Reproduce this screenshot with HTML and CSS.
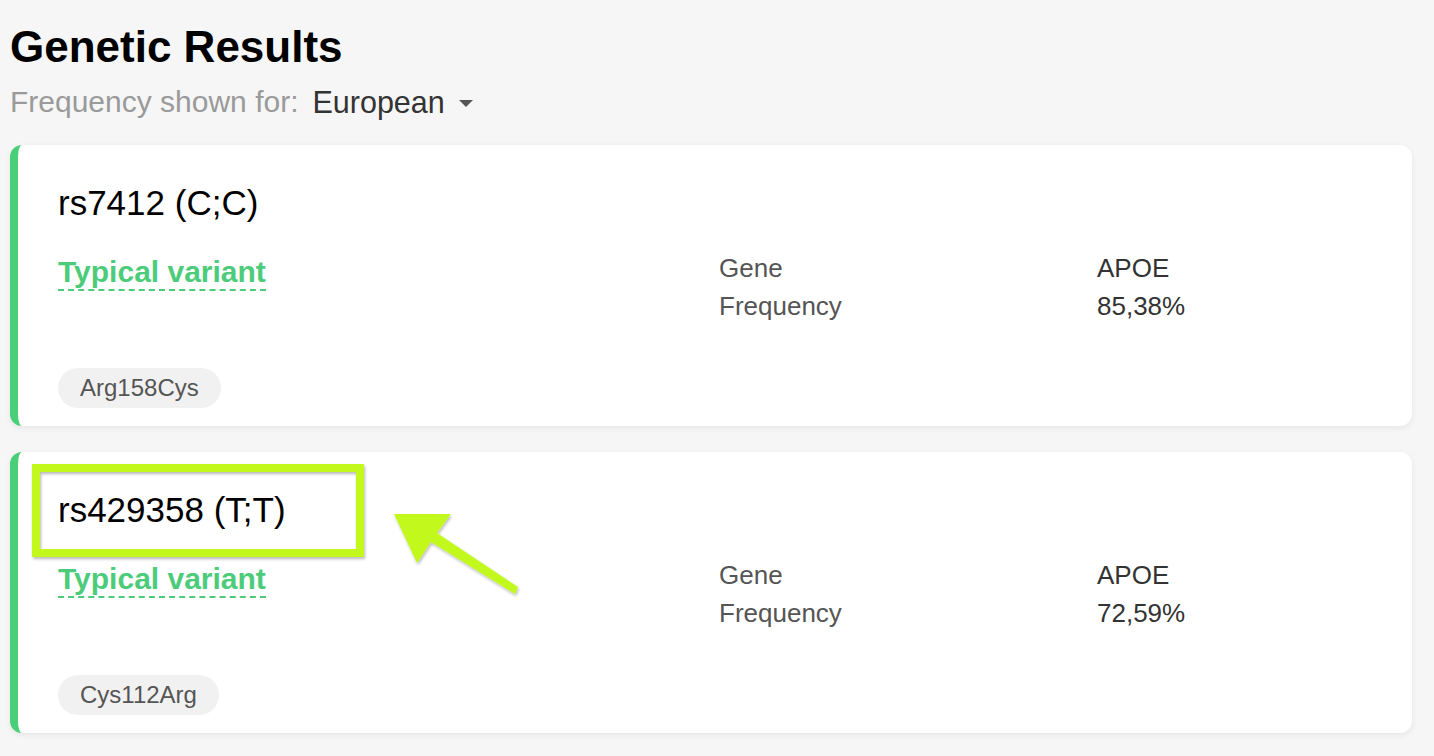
FILE: index.html
```html
<!DOCTYPE html>
<html lang="en">
<head>
<meta charset="utf-8">
<title>Genetic Results</title>
<link rel="stylesheet" href="styles.css">
</head>
<body>
<div class="page">
  <h1 class="title">Genetic Results</h1>
  <div class="subtitle">
    <span class="sub-label">Frequency shown for:</span>
    <span class="sub-select">European</span>
    <span class="caret"></span>
  </div>

  <div class="cards">
    <div class="card">
      <div class="card-title">rs7412 (C;C)</div>
      <div class="card-row">
        <div class="variant"><span class="variant-text">Typical variant</span></div>
        <div class="info">
          <div class="info-label">Gene</div><div class="info-value">APOE</div>
          <div class="info-label">Frequency</div><div class="info-value">85,38%</div>
        </div>
      </div>
      <div class="tags"><span class="tag">Arg158Cys</span></div>
    </div>

    <div class="card">
      <div class="card-title">rs429358 (T;T)</div>
      <div class="card-row">
        <div class="variant"><span class="variant-text">Typical variant</span></div>
        <div class="info">
          <div class="info-label">Gene</div><div class="info-value">APOE</div>
          <div class="info-label">Frequency</div><div class="info-value">72,59%</div>
        </div>
      </div>
      <div class="tags"><span class="tag">Cys112Arg</span></div>
    </div>
  </div>
</div>

<svg class="annotation" width="1434" height="756" viewBox="0 0 1434 756" xmlns="http://www.w3.org/2000/svg">
  <defs>
    <filter id="sh" x="-10%" y="-10%" width="130%" height="130%">
      <feDropShadow dx="1" dy="2" stdDeviation="1.5" flood-color="#000" flood-opacity="0.28"/>
    </filter>
  </defs>
  <rect x="36" y="468" width="324" height="85" fill="none" stroke="#c3f81c" stroke-width="8" filter="url(#sh)"/>
  <polygon points="394,514 451,514 437,533 518,587 515,594 431,542 417,563" fill="#c3f81c" filter="url(#sh)"/>
</svg>
</body>
</html>
```

FILE: styles.css
```css
html, body {
  margin: 0;
  padding: 0;
}

body {
  background: #f6f6f6;
  font-family: "Liberation Sans", Arial, Helvetica, sans-serif;
  color: #000;
  position: relative;
  width: 1434px;
  height: 756px;
  overflow: hidden;
}

.page {
  padding: 21px 22px 0 10px;
}

.title {
  margin: 0;
  font-size: 44px;
  line-height: 52px;
  font-weight: 700;
  color: #000;
}

.subtitle {
  margin-top: 11px;
  display: flex;
  align-items: center;
  font-size: 30px;
  line-height: 36px;
}

.sub-label {
  color: #9a9a9a;
}

.sub-select {
  color: #333;
  margin-left: 14px;
  font-size: 30.5px;
}

.caret {
  width: 0;
  height: 0;
  margin-left: 14px;
  margin-top: 2px;
  border-left: 7px solid transparent;
  border-right: 7px solid transparent;
  border-top: 7px solid #555;
}

.cards {
  margin-top: 25px;
  display: flex;
  flex-direction: column;
  gap: 26px;
}

.card {
  background: #fff;
  border-left: 8px solid #48cf78;
  border-radius: 12px;
  box-shadow: 0 2px 6px rgba(0, 0, 0, 0.07);
  padding: 38px 40px 18px 40px;
}

.card-title {
  font-size: 35px;
  line-height: 40px;
  color: #000;
}

.card-row {
  margin-top: 26px;
  display: grid;
  grid-template-columns: 661px 1fr;
}

.variant {
  padding-top: 5px;
  font-size: 30px;
  line-height: 36px;
  font-weight: 700;
}

.variant-text {
  color: #4ccc7a;
  border-bottom: 2px dashed #4ccc7a;
  padding-bottom: 1px;
}

.info {
  display: grid;
  grid-template-columns: 378px 1fr;
  font-size: 26px;
  line-height: 38px;
}

.info-label {
  color: #555;
}

.info-value {
  color: #333;
}

.tags {
  margin-top: 43px;
  display: flex;
}

.tag {
  background: #f1f1f1;
  color: #555;
  font-size: 24px;
  line-height: 40px;
  height: 40px;
  padding: 0 22px;
  border-radius: 20px;
}

.annotation {
  position: absolute;
  left: 0;
  top: 0;
  pointer-events: none;
}
```
